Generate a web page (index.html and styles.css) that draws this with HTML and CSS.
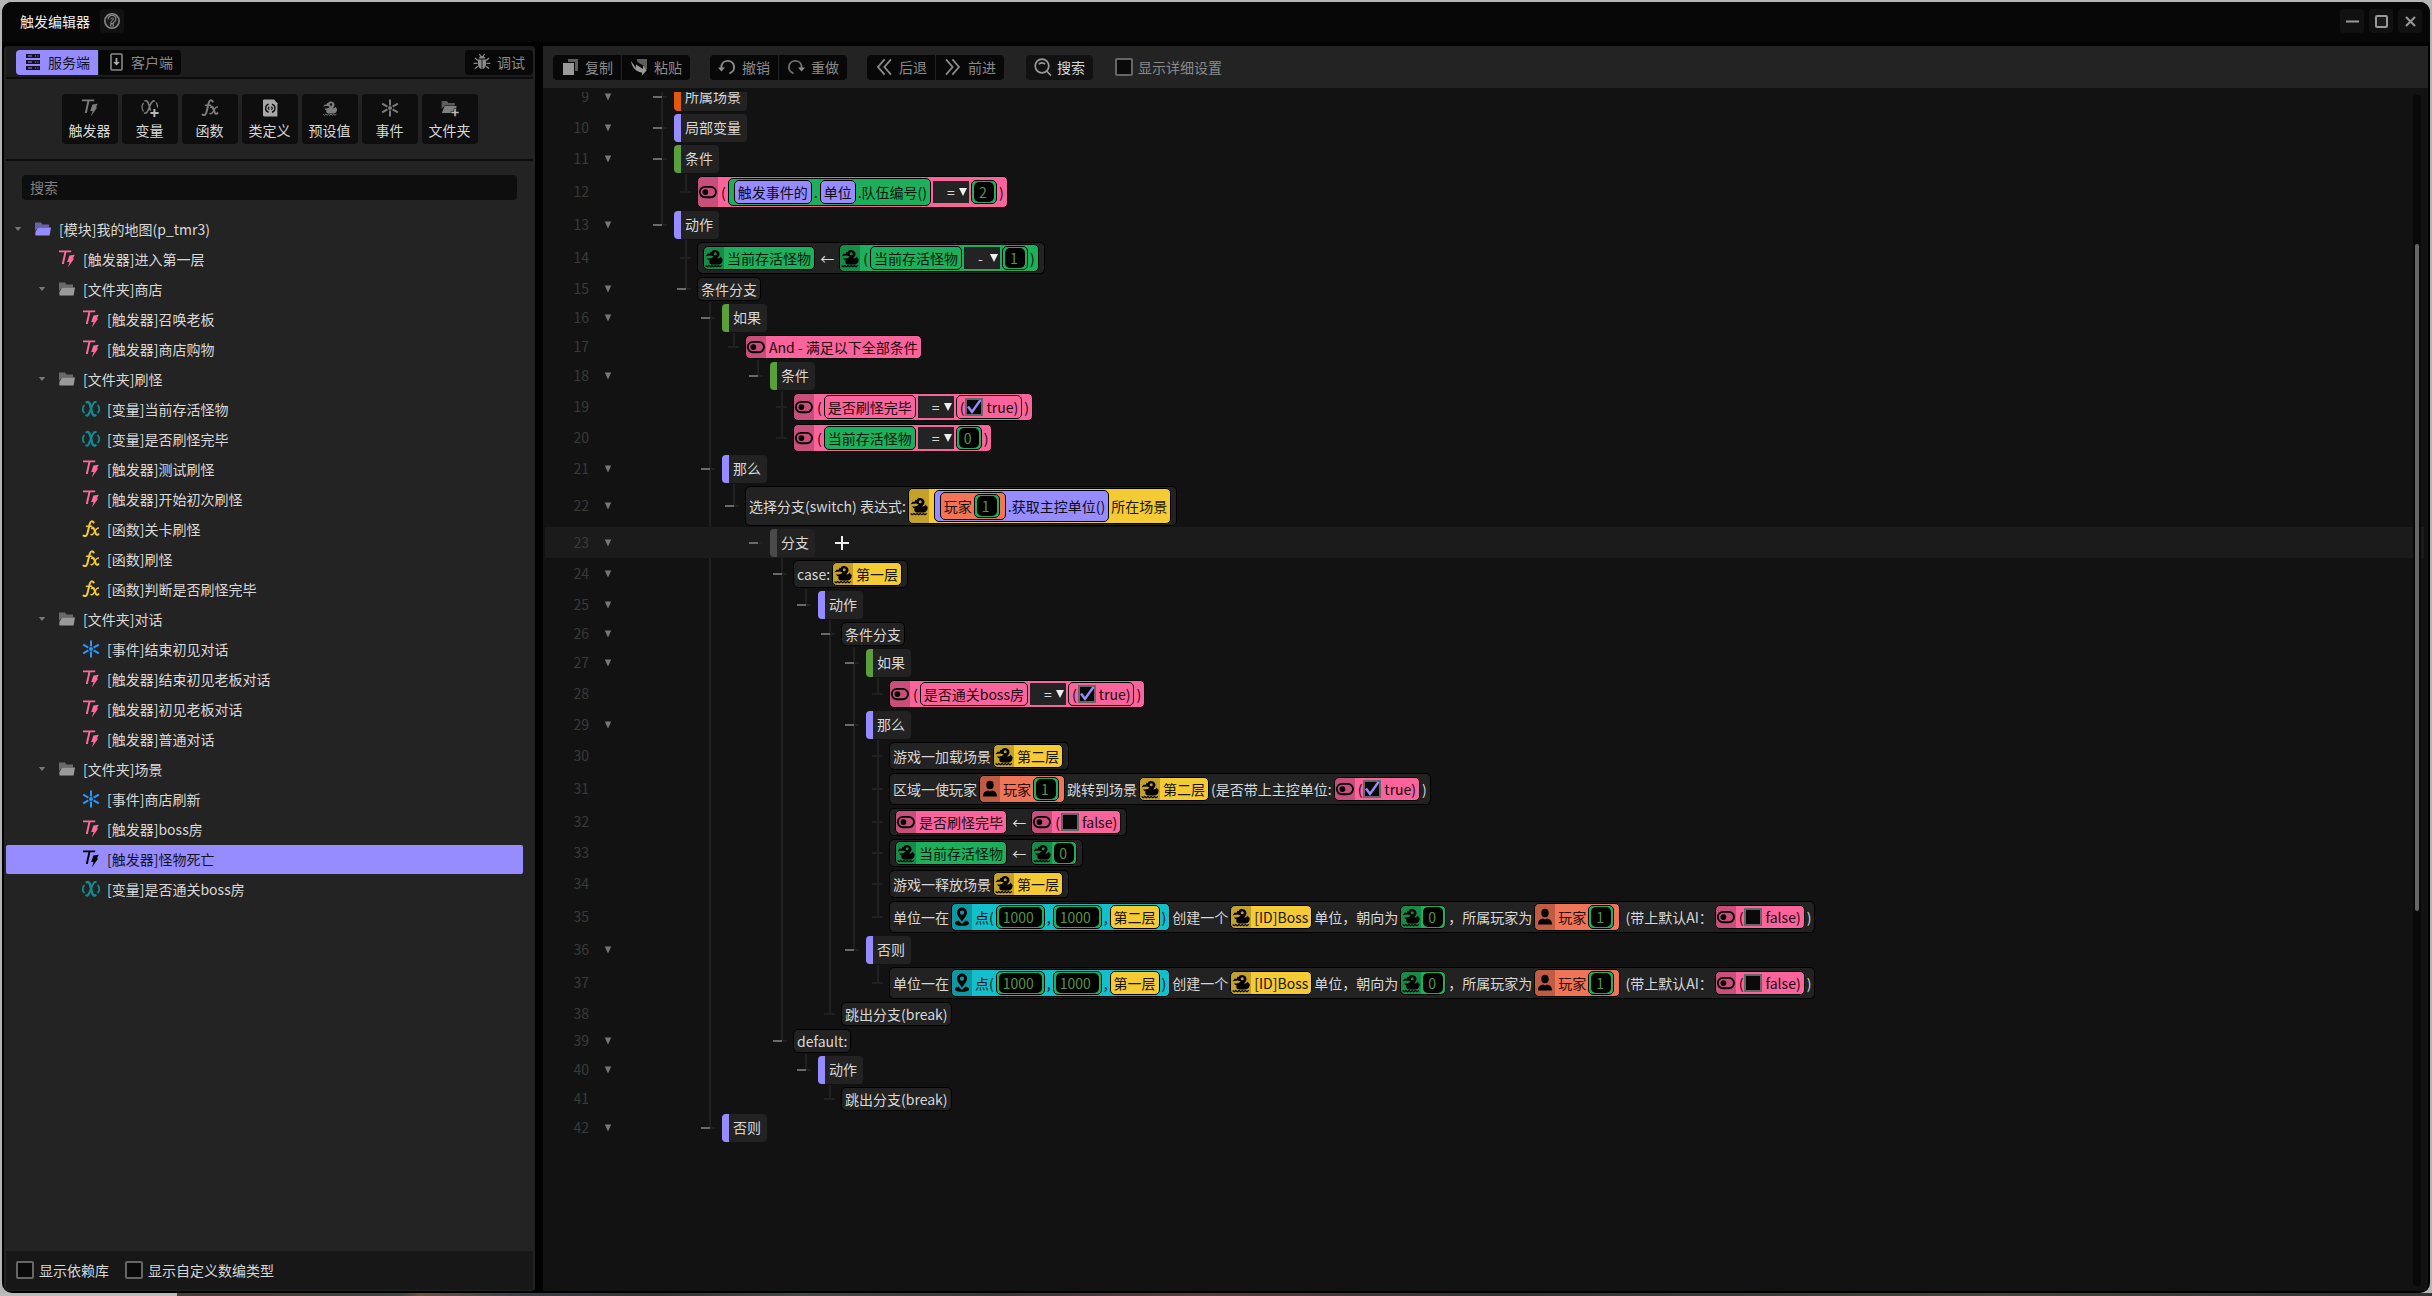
FILE: index.html
```html
<!DOCTYPE html>
<html lang="zh-CN">
<head>
<meta charset="utf-8">
<meta name="viewport" content="width=device-width, initial-scale=1">
<title>触发编辑器</title>
<link rel="stylesheet" href="styles.css">
</head>
<body>
<svg class="sprite" aria-hidden="true">
  <symbol id="trigger" viewBox="0 0 18 18"><path fill="currentColor" d="M1 0.6H13.2V2.2H8.4L5.8 14H3.8L6.4 2.2H1ZM11.4 5.4L16.8 4.8L14.8 8.4H16.2L9.8 17.6L11.6 12H9.2Z"/></symbol>
  <symbol id="variable" viewBox="0 0 18 18"><g fill="none" stroke="currentColor" stroke-linecap="round"><path stroke-width="2.4" d="M4.6 2.2C6.4 1.2 7.3 2.6 8 4.6L10.2 13C10.8 15 11.8 16.4 13.6 15.2"/><path stroke-width="2" d="M13.8 2.2C12 1.4 11.2 3.4 9.8 6.4L8 11C6.8 14 6 16.4 4.2 15.4"/><path stroke-width="1.7" d="M2 5.4C0.4 7.6 0.4 10.2 2 12.4M16 5.4C17.6 7.6 17.6 10.2 16 12.4"/></g></symbol>
  <symbol id="variable-add" viewBox="0 0 18 18"><g fill="none" stroke="currentColor" stroke-linecap="round"><path stroke-width="1.6" d="M4 2C6 1 7 3 7.6 5L9.4 11M13.4 2C11.4 1.2 10.4 3.4 9.2 6L7.2 11C6.2 13.4 5.2 14.8 3.6 14"/><path stroke-width="1.3" d="M2.2 4.4C0.6 6.8 0.6 9.4 2.2 12M15.4 3.8C16.2 5 16.6 6.4 16.4 8"/></g><path fill="#b8b8b8" d="M12.4 10H14.4V13H17.6V15H14.4V18H12.4V15H9.4V13H12.4Z"/></symbol>
  <symbol id="function" viewBox="0 0 18 18"><g fill="none" stroke="currentColor" stroke-linecap="round"><path stroke-width="2" d="M11.6 2.4C10.4 0.6 8.4 1 7.7 4L5.6 12.8C4.9 15.6 3.6 16.8 1.6 15.6"/><path stroke-width="1.4" d="M4.4 6.2H9.8"/><path stroke-width="2.1" d="M10 8.2C11.6 7.2 12 8.6 12.6 10.4L13.6 13.4C14.2 15 15.2 15.2 16.4 14.2"/><path stroke-width="1.4" d="M16.4 8C14.8 7.6 13.8 9.8 12.8 11.4C11.8 13.2 10.8 15.4 9 14.6"/></g></symbol>
  <symbol id="class" viewBox="0 0 18 18"><path fill="#a8a8a8" d="M3.4 0.6H13L16.4 4.2V17.4H3.4C2.4 17.4 2 16.8 2 16V2C2 1.2 2.4 0.6 3.4 0.6Z"/><g fill="none" stroke="#111" stroke-width="1.4"><path d="M7.6 5.2C5.2 6 4.6 7.6 4.6 9.2C4.6 10.8 5.2 12.6 7.6 13.2M11 5.2C13.4 6 14 7.6 14 9.2C14 10.8 13.4 12.6 11 13.2"/><path stroke-width="1.2" d="M8.2 7.6L7.2 9.2L8.2 10.8M10.4 7.6L11.4 9.2L10.4 10.8"/></g></symbol>
  <symbol id="dino" viewBox="0 0 20 22"><path fill="currentColor" fill-rule="evenodd" d="M1.6 9.2L3.8 6.6L5.4 7L6.6 4.8L7.8 5L8.6 3.6C10.4 2.4 14.6 3 15.4 6C16 8.4 14.4 10 13.2 11.2C14.8 11.8 15.8 10.8 17 9.6C17.2 11 17.6 11.4 18.6 11.8C19 14.6 17.4 17.4 14.4 17.6H8C5.4 17.2 4.6 15 5.8 13.6C4.4 13.4 3.4 12.4 3.2 11.2C5.6 12 8.2 11.4 9.6 9.6L7 8.6C5 8.6 3.4 8.8 1.6 9.2ZM11.2 5.2A1.5 1.5 0 1 0 11.2 8.2A1.5 1.5 0 1 0 11.2 5.2Z"/><path fill="none" stroke="currentColor" stroke-width="1.2" d="M1.6 18.6L3.2 19.8L4.8 18.6L6.4 19.8L8 18.6L9.6 19.8L11.2 18.6L12.8 19.8L14.4 18.6L16 19.8L17.8 18.4"/></symbol>
  <symbol id="event" viewBox="0 0 18 18"><g stroke="currentColor" stroke-width="2" fill="currentColor"><path d="M9 0.4V6.4M9 11.6V17.6M1.2 4.6L6.4 7.6M11.6 10.4L16.8 13.4M16.8 4.6L11.6 7.6M6.4 10.4L1.2 13.4"/><circle cx="9" cy="9" r="2" stroke="none"/></g></symbol>
  <symbol id="folder" viewBox="0 0 18 18"><path fill="currentColor" opacity=".6" d="M1 2.6H7L8.4 4.6H15V7.4H4L1 11Z"/><path fill="currentColor" d="M4 7.4H17L15.6 15.4H1.4V12Z"/></symbol>
  <symbol id="folder-add" viewBox="0 0 18 18"><path fill="#5c5c5c" d="M0.6 2H6L7.4 4H13.8V6.6H3.6L0.6 10Z"/><path fill="#7e7e7e" d="M3.6 7H15.6L14.4 14H0.8Z"/><path fill="#b8b8b8" stroke="#111" stroke-width=".6" d="M13 9.6H15.2V12.4H18V14.6H15.2V17.6H13V14.6H10V12.4H13Z"/></symbol>
  <symbol id="toggle" viewBox="0 0 20 22"><rect x="1.8" y="5.9" width="16.2" height="10.4" rx="5.2" fill="none" stroke="currentColor" stroke-width="1.9"/><circle cx="7.4" cy="11.1" r="2.9" fill="currentColor"/></symbol>
  <symbol id="person" viewBox="0 0 20 22"><ellipse cx="10" cy="7" rx="3.7" ry="4.2" fill="currentColor"/><path fill="currentColor" d="M3 18.6C3 14.6 5.2 13.2 8 12.6L10 13.6L12 12.6C14.8 13.2 17 14.6 17 18.6Z"/></symbol>
  <symbol id="pin" viewBox="0 0 20 22"><path fill="currentColor" fill-rule="evenodd" d="M10 1.6A5 5 0 0 1 15 6.6C15 9.8 12 12.4 10 15.8C8 12.4 5 9.8 5 6.6A5 5 0 0 1 10 1.6ZM10 4.4A2.2 2.2 0 1 0 10 8.8A2.2 2.2 0 1 0 10 4.4Z"/><path fill="currentColor" d="M6.4 14.4C4.6 14.8 3 15.8 3 17.2C3 19 6.2 19.8 10 19.8S17 19 17 17.2C17 15.8 15.4 14.8 13.6 14.4L10 18Z"/></symbol>
  <symbol id="server" viewBox="0 0 18 18"><path fill="currentColor" d="M2 1H16V5H2ZM2 7H16V11H2ZM2 13H16V17H2Z"/><path stroke="#968cff" stroke-width="1" d="M4 3H8M4 9H8M4 15H8M11 3H12M13.4 3H14.4M11 9H12M13.4 9H14.4M11 15H12M13.4 15H14.4"/></symbol>
  <symbol id="client" viewBox="0 0 18 18"><rect x="4" y="1" width="11" height="16" rx="1" fill="none" stroke="currentColor" stroke-width="1.6"/><path fill="#aaa" d="M8.6 5H10.4V9H12.8L9.5 12.6L6.2 9H8.6Z"/></symbol>
  <symbol id="bug" viewBox="0 0 18 18"><path fill="currentColor" d="M6 5.6C6 3.6 7.4 2.8 9 2.8S12 3.6 12 5.6ZM5 6.4H8.6V16C6 15.6 5 13.6 5 11ZM9.4 6.4H13V11C13 13.6 12 15.6 9.4 16Z"/><path stroke="currentColor" stroke-width="1.3" fill="none" d="M6.4 1L7.6 3M11.6 1L10.4 3M2 5L4.8 7.4M16 5L13.2 7.4M0.6 10.4H4.6M17.4 10.4H13.4M2 15.8L4.8 13.2M16 15.8L13.2 13.2"/></symbol>
  <symbol id="copy" viewBox="0 0 18 18"><path fill="#5e5e5e" d="M7 1H17V13H14V4H7Z"/><path fill="#9a9a9a" d="M2 5H13V17H2Z"/></symbol>
  <symbol id="paste" viewBox="0 0 18 18"><path fill="#5e5e5e" d="M7 1H17V11L14 14V8L9 5L7 3Z"/><path fill="#9a9a9a" d="M1 3L6 10V6.6L13 11V7.6L16.6 12.6L12 17.4V14.4C7 14.4 2 10 1 3Z"/></symbol>
  <symbol id="undo" viewBox="0 0 18 18"><path fill="none" stroke="#8e8e8e" stroke-width="1.9" d="M3.4 10.4V8A6.4 6.4 0 1 1 11.4 15.4"/><path fill="#8e8e8e" d="M0 9.4H7L3.4 13.6Z"/></symbol>
  <symbol id="redo" viewBox="0 0 18 18"><path fill="none" stroke="#6e6e6e" stroke-width="1.9" d="M14.6 10.4V8A6.4 6.4 0 1 0 6.6 15.4"/><path fill="#8e8e8e" d="M11 9.4H18L14.6 13.6Z"/></symbol>
  <symbol id="back" viewBox="0 0 18 18"><path fill="none" stroke="currentColor" stroke-width="1.8" d="M9.6 1.4L3 9L9.6 16.6M16 1.4L9.4 9L16 16.6"/></symbol>
  <symbol id="forward" viewBox="0 0 18 18"><path fill="none" stroke="currentColor" stroke-width="1.8" d="M2 1.4L8.6 9L2 16.6M8.4 1.4L15 9L8.4 16.6"/></symbol>
  <symbol id="search" viewBox="0 0 18 18"><circle cx="8" cy="8" r="6.8" fill="none" stroke="currentColor" stroke-width="1.7"/><path fill="none" stroke="currentColor" stroke-width="1.7" d="M12.6 13L17 17.6M5 6.4C6 4.6 9.4 4.2 11 6.2"/></symbol>
  <symbol id="help" viewBox="0 0 18 18"><circle cx="9" cy="9" r="7.2" fill="#1c1c1c" stroke="#858585" stroke-width="1.6"/><path fill="none" stroke="#858585" stroke-width="3.6" d="M6.4 7.2C6.4 3.8 11.8 3.8 11.8 7C11.8 9 9 9 9 11.6V14.4"/><path fill="none" stroke="#151515" stroke-width="1.4" d="M6.6 7.4C6.6 4 11.6 4 11.6 7C11.6 9 9 9 9 11M9 12.4V14"/></symbol>
  <symbol id="min" viewBox="0 0 18 18"><path stroke="currentColor" stroke-width="2" d="M3 9.4H16"/></symbol>
  <symbol id="max" viewBox="0 0 18 18"><rect x="4" y="4" width="11" height="11" rx="1" fill="#1a1a1a" stroke="currentColor" stroke-width="2"/></symbol>
  <symbol id="close" viewBox="0 0 18 18"><path stroke="currentColor" stroke-width="2" d="M5 5L14 14M14 5L5 14"/></symbol>
  <symbol id="tri" viewBox="0 0 8 8"><path fill="currentColor" d="M0.8 0.6H7.2L4 7.4Z"/></symbol>
  <symbol id="tri-flat" viewBox="0 0 8 8"><path fill="currentColor" d="M0.8 2H7.2L4 6Z"/></symbol>
</svg>

<div class="window">
  <header class="titlebar">
    <h1>触发编辑器</h1>
    <button class="tool-btn" aria-label="帮助"><svg><use href="#help"/></svg></button>
    <div class="win-btns">
      <button class="tool-btn" aria-label="最小化"><svg><use href="#min"/></svg></button>
      <button class="tool-btn" aria-label="最大化"><svg><use href="#max"/></svg></button>
      <button class="tool-btn" aria-label="关闭"><svg><use href="#close"/></svg></button>
    </div>
  </header>
  <div class="main">
    <aside class="sidebar">
      <div class="tabs">
        <div class="group">
          <button class="btn on"><svg><use href="#server"/></svg>服务端</button>
          <button class="btn"><svg><use href="#client"/></svg>客户端</button>
        </div>
        <div class="group"><button class="btn"><svg><use href="#bug"/></svg>调试</button></div>
      </div>
      <div class="create">
        <button><svg><use href="#trigger"/></svg>触发器</button>
        <button><svg><use href="#variable-add"/></svg>变量</button>
        <button><svg><use href="#function"/></svg>函数</button>
        <button><svg><use href="#class"/></svg>类定义</button>
        <button><svg><use href="#dino"/></svg>预设值</button>
        <button><svg><use href="#event"/></svg>事件</button>
        <button><svg><use href="#folder-add"/></svg>文件夹</button>
      </div>
      <input class="filter" type="text" placeholder="搜索" aria-label="搜索">
      <ul class="tree">
        <li class="root"><i><svg class="tri"><use href="#tri-flat"/></svg></i><svg><use href="#folder"/></svg>[模块]我的地图(p_tmr3)</li>
        <li class="lv1 trg"><i></i><svg><use href="#trigger"/></svg>[触发器]进入第一层</li>
        <li class="lv1"><i><svg class="tri"><use href="#tri-flat"/></svg></i><svg><use href="#folder"/></svg>[文件夹]商店</li>
        <li class="lv2 trg"><i></i><svg><use href="#trigger"/></svg>[触发器]召唤老板</li>
        <li class="lv2 trg"><i></i><svg><use href="#trigger"/></svg>[触发器]商店购物</li>
        <li class="lv1"><i><svg class="tri"><use href="#tri-flat"/></svg></i><svg><use href="#folder"/></svg>[文件夹]刷怪</li>
        <li class="lv2 var"><i></i><svg><use href="#variable"/></svg>[变量]当前存活怪物</li>
        <li class="lv2 var"><i></i><svg><use href="#variable"/></svg>[变量]是否刷怪完毕</li>
        <li class="lv2 trg"><i></i><svg><use href="#trigger"/></svg>[触发器]测试刷怪</li>
        <li class="lv2 trg"><i></i><svg><use href="#trigger"/></svg>[触发器]开始初次刷怪</li>
        <li class="lv2 fun"><i></i><svg><use href="#function"/></svg>[函数]关卡刷怪</li>
        <li class="lv2 fun"><i></i><svg><use href="#function"/></svg>[函数]刷怪</li>
        <li class="lv2 fun"><i></i><svg><use href="#function"/></svg>[函数]判断是否刷怪完毕</li>
        <li class="lv1"><i><svg class="tri"><use href="#tri-flat"/></svg></i><svg><use href="#folder"/></svg>[文件夹]对话</li>
        <li class="lv2 evt"><i></i><svg><use href="#event"/></svg>[事件]结束初见对话</li>
        <li class="lv2 trg"><i></i><svg><use href="#trigger"/></svg>[触发器]结束初见老板对话</li>
        <li class="lv2 trg"><i></i><svg><use href="#trigger"/></svg>[触发器]初见老板对话</li>
        <li class="lv2 trg"><i></i><svg><use href="#trigger"/></svg>[触发器]普通对话</li>
        <li class="lv1"><i><svg class="tri"><use href="#tri-flat"/></svg></i><svg><use href="#folder"/></svg>[文件夹]场景</li>
        <li class="lv2 evt"><i></i><svg><use href="#event"/></svg>[事件]商店刷新</li>
        <li class="lv2 trg"><i></i><svg><use href="#trigger"/></svg>[触发器]boss房</li>
        <li class="lv2 selected"><i></i><svg><use href="#trigger"/></svg>[触发器]怪物死亡</li>
        <li class="lv2 var"><i></i><svg><use href="#variable"/></svg>[变量]是否通关boss房</li>
      </ul>
      <footer class="options">
        <label class="check"><input type="checkbox">显示依赖库</label>
        <label class="check"><input type="checkbox">显示自定义数编类型</label>
      </footer>
    </aside>

    <section class="editor">
      <div class="toolbar">
        <div class="group"><button class="btn"><svg><use href="#copy"/></svg>复制</button><button class="btn"><svg><use href="#paste"/></svg>粘贴</button></div>
        <div class="group"><button class="btn"><svg><use href="#undo"/></svg>撤销</button><button class="btn"><svg><use href="#redo"/></svg>重做</button></div>
        <div class="group"><button class="btn"><svg><use href="#back"/></svg>后退</button><button class="btn"><svg><use href="#forward"/></svg>前进</button></div>
        <button class="btn find"><svg><use href="#search"/></svg>搜索</button>
        <label class="check"><input type="checkbox">显示详细设置</label>
      </div>
      <div class="view">
        <div class="rows">
          <div class="row"><b>9</b><button class="fold" aria-label="折叠"><svg><use href="#tri"/></svg></button><i class="n v"></i><div class="sec orange">所属场景</div></div>
          <div class="row"><b>10</b><button class="fold" aria-label="折叠"><svg><use href="#tri"/></svg></button><i class="n v"></i><div class="sec purple">局部变量</div></div>
          <div class="row"><b>11</b><button class="fold" aria-label="折叠"><svg><use href="#tri"/></svg></button><i class="n v"></i><div class="sec green">条件</div></div>
          <div class="row"><b>12</b><span class="fold"></span><i class="v"></i><i class="l h"></i><div class="p pink"><span class="ic"><svg><use href="#toggle"/></svg></span>(<div class="p green"><div class="p purple">触发事件的</div>.<div class="p purple">单位</div>.队伍编号()</div><select aria-label="运算符"><option>=</option></select><div class="p num"><input value="2" aria-label="数值"></div>)</div></div>
          <div class="row"><b>13</b><button class="fold" aria-label="折叠"><svg><use href="#tri"/></svg></button><i class="n h"></i><div class="sec purple">动作</div></div>
          <div class="row"><b>14</b><span class="fold"></span><i></i><i class="l v"></i><div class="p"><div class="p green"><span class="ic"><svg><use href="#dino"/></svg></span>当前存活怪物</div> ← <div class="p green"><span class="ic"><svg><use href="#dino"/></svg></span>(<div class="p green">当前存活怪物</div><select aria-label="运算符"><option>-</option></select><div class="p num"><input value="1" aria-label="数值"></div>)</div></div></div>
          <div class="row"><b>15</b><button class="fold" aria-label="折叠"><svg><use href="#tri"/></svg></button><i></i><i class="n h"></i><div class="p">条件分支</div></div>
          <div class="row"><b>16</b><button class="fold" aria-label="折叠"><svg><use href="#tri"/></svg></button><i></i><i></i><i class="n v"></i><div class="sec green">如果</div></div>
          <div class="row"><b>17</b><span class="fold"></span><i></i><i></i><i class="v"></i><i class="l h"></i><div class="p pink"><span class="ic"><svg><use href="#toggle"/></svg></span>And - 满足以下全部条件</div></div>
          <div class="row"><b>18</b><button class="fold" aria-label="折叠"><svg><use href="#tri"/></svg></button><i></i><i></i><i class="v"></i><i></i><i class="n h"></i><div class="sec green">条件</div></div>
          <div class="row"><b>19</b><span class="fold"></span><i></i><i></i><i class="v"></i><i></i><i></i><i class="l v"></i><div class="p pink"><span class="ic"><svg><use href="#toggle"/></svg></span>(<div class="p pink">是否刷怪完毕</div><select aria-label="运算符"><option>=</option></select><div class="p pink">(<input type="checkbox" checked aria-label="true">true)</div>)</div></div>
          <div class="row"><b>20</b><span class="fold"></span><i></i><i></i><i class="v"></i><i></i><i></i><i class="l h"></i><div class="p pink"><span class="ic"><svg><use href="#toggle"/></svg></span>(<div class="p green">当前存活怪物</div><select aria-label="运算符"><option>=</option></select><div class="p num"><input value="0" aria-label="数值"></div>)</div></div>
          <div class="row"><b>21</b><button class="fold" aria-label="折叠"><svg><use href="#tri"/></svg></button><i></i><i></i><i class="n v"></i><div class="sec purple">那么</div></div>
          <div class="row"><b>22</b><button class="fold" aria-label="折叠"><svg><use href="#tri"/></svg></button><i></i><i></i><i class="v"></i><i class="n h"></i><div class="p">选择分支(switch) 表达式:<div class="p yellow"><span class="ic"><svg><use href="#dino"/></svg></span><div class="p purple"><div class="p orange">玩家<div class="p num"><input value="1" aria-label="数值"></div></div>.获取主控单位()</div>所在场景</div></div></div>
          <div class="row current"><b>23</b><button class="fold" aria-label="折叠"><svg><use href="#tri"/></svg></button><i></i><i></i><i></i><i></i><i class="n"></i><div class="sec gray">分支</div><button class="add" aria-label="添加"></button></div>
          <div class="row"><b>24</b><button class="fold" aria-label="折叠"><svg><use href="#tri"/></svg></button><i></i><i></i><i class="v"></i><i></i><i></i><i class="n v"></i><div class="p">case:<div class="p yellow"><span class="ic"><svg><use href="#dino"/></svg></span>第一层</div></div></div>
          <div class="row"><b>25</b><button class="fold" aria-label="折叠"><svg><use href="#tri"/></svg></button><i></i><i></i><i class="v"></i><i></i><i></i><i class="v"></i><i class="n h"></i><div class="sec purple">动作</div></div>
          <div class="row"><b>26</b><button class="fold" aria-label="折叠"><svg><use href="#tri"/></svg></button><i></i><i></i><i class="v"></i><i></i><i></i><i class="v"></i><i></i><i class="n v"></i><div class="p">条件分支</div></div>
          <div class="row"><b>27</b><button class="fold" aria-label="折叠"><svg><use href="#tri"/></svg></button><i></i><i></i><i class="v"></i><i></i><i></i><i class="v"></i><i></i><i class="v"></i><i class="n v"></i><div class="sec green">如果</div></div>
          <div class="row"><b>28</b><span class="fold"></span><i></i><i></i><i class="v"></i><i></i><i></i><i class="v"></i><i></i><i class="v"></i><i class="v"></i><i class="l h"></i><div class="p pink"><span class="ic"><svg><use href="#toggle"/></svg></span>(<div class="p pink">是否通关boss房</div><select aria-label="运算符"><option>=</option></select><div class="p pink">(<input type="checkbox" checked aria-label="true">true)</div>)</div></div>
          <div class="row"><b>29</b><button class="fold" aria-label="折叠"><svg><use href="#tri"/></svg></button><i></i><i></i><i class="v"></i><i></i><i></i><i class="v"></i><i></i><i class="v"></i><i class="n v"></i><div class="sec purple">那么</div></div>
          <div class="row"><b>30</b><span class="fold"></span><i></i><i></i><i class="v"></i><i></i><i></i><i class="v"></i><i></i><i class="v"></i><i class="v"></i><i class="l v"></i><div class="p">游戏一加载场景<div class="p yellow"><span class="ic"><svg><use href="#dino"/></svg></span>第二层</div></div></div>
          <div class="row"><b>31</b><span class="fold"></span><i></i><i></i><i class="v"></i><i></i><i></i><i class="v"></i><i></i><i class="v"></i><i class="v"></i><i class="l v"></i><div class="p">区域一使玩家<div class="p orange"><span class="ic"><svg><use href="#person"/></svg></span>玩家<div class="p num"><input value="1" aria-label="数值"></div></div>跳转到场景<div class="p yellow"><span class="ic"><svg><use href="#dino"/></svg></span>第二层</div>(是否带上主控单位:<div class="p pink"><span class="ic"><svg><use href="#toggle"/></svg></span>(<input type="checkbox" checked aria-label="true">true)</div>)</div></div>
          <div class="row"><b>32</b><span class="fold"></span><i></i><i></i><i class="v"></i><i></i><i></i><i class="v"></i><i></i><i class="v"></i><i class="v"></i><i class="l v"></i><div class="p"><div class="p pink"><span class="ic"><svg><use href="#toggle"/></svg></span>是否刷怪完毕</div> ← <div class="p pink"><span class="ic"><svg><use href="#toggle"/></svg></span>(<input type="checkbox" aria-label="false">false)</div></div></div>
          <div class="row"><b>33</b><span class="fold"></span><i></i><i></i><i class="v"></i><i></i><i></i><i class="v"></i><i></i><i class="v"></i><i class="v"></i><i class="l v"></i><div class="p"><div class="p green"><span class="ic"><svg><use href="#dino"/></svg></span>当前存活怪物</div> ← <div class="p num"><span class="ic"><svg><use href="#dino"/></svg></span><input value="0" aria-label="数值"></div></div></div>
          <div class="row"><b>34</b><span class="fold"></span><i></i><i></i><i class="v"></i><i></i><i></i><i class="v"></i><i></i><i class="v"></i><i class="v"></i><i class="l v"></i><div class="p">游戏一释放场景<div class="p yellow"><span class="ic"><svg><use href="#dino"/></svg></span>第一层</div></div></div>
          <div class="row"><b>35</b><span class="fold"></span><i></i><i></i><i class="v"></i><i></i><i></i><i class="v"></i><i></i><i class="v"></i><i class="v"></i><i class="l h"></i><div class="p">单位一在<div class="p cyan"><span class="ic"><svg><use href="#pin"/></svg></span>点(<div class="p num"><input class="wide" value="1000" aria-label="X"></div>,<div class="p num"><input class="wide" value="1000" aria-label="Y"></div>,<div class="p yellow">第二层</div>)</div>创建一个<div class="p yellow"><span class="ic"><svg><use href="#dino"/></svg></span>[ID]Boss</div>单位，朝向为<div class="p num"><span class="ic"><svg><use href="#dino"/></svg></span><input value="0" aria-label="数值"></div>，所属玩家为<div class="p orange"><span class="ic"><svg><use href="#person"/></svg></span>玩家<div class="p num"><input value="1" aria-label="数值"></div></div> (带上默认AI：<div class="p pink"><span class="ic"><svg><use href="#toggle"/></svg></span>(<input type="checkbox" aria-label="false">false)</div>)</div></div>
          <div class="row"><b>36</b><button class="fold" aria-label="折叠"><svg><use href="#tri"/></svg></button><i></i><i></i><i class="v"></i><i></i><i></i><i class="v"></i><i></i><i class="v"></i><i class="n h"></i><div class="sec purple">否则</div></div>
          <div class="row"><b>37</b><span class="fold"></span><i></i><i></i><i class="v"></i><i></i><i></i><i class="v"></i><i></i><i class="v"></i><i></i><i class="l h"></i><div class="p">单位一在<div class="p cyan"><span class="ic"><svg><use href="#pin"/></svg></span>点(<div class="p num"><input class="wide" value="1000" aria-label="X"></div>,<div class="p num"><input class="wide" value="1000" aria-label="Y"></div>,<div class="p yellow">第一层</div>)</div>创建一个<div class="p yellow"><span class="ic"><svg><use href="#dino"/></svg></span>[ID]Boss</div>单位，朝向为<div class="p num"><span class="ic"><svg><use href="#dino"/></svg></span><input value="0" aria-label="数值"></div>，所属玩家为<div class="p orange"><span class="ic"><svg><use href="#person"/></svg></span>玩家<div class="p num"><input value="1" aria-label="数值"></div></div> (带上默认AI：<div class="p pink"><span class="ic"><svg><use href="#toggle"/></svg></span>(<input type="checkbox" aria-label="false">false)</div>)</div></div>
          <div class="row"><b>38</b><span class="fold"></span><i></i><i></i><i class="v"></i><i></i><i></i><i class="v"></i><i></i><i class="l h"></i><div class="p">跳出分支(break)</div></div>
          <div class="row"><b>39</b><button class="fold" aria-label="折叠"><svg><use href="#tri"/></svg></button><i></i><i></i><i class="v"></i><i></i><i></i><i class="n h"></i><div class="p">default:</div></div>
          <div class="row"><b>40</b><button class="fold" aria-label="折叠"><svg><use href="#tri"/></svg></button><i></i><i></i><i class="v"></i><i></i><i></i><i></i><i class="n h"></i><div class="sec purple">动作</div></div>
          <div class="row"><b>41</b><span class="fold"></span><i></i><i></i><i class="v"></i><i></i><i></i><i></i><i></i><i class="l h"></i><div class="p">跳出分支(break)</div></div>
          <div class="row"><b>42</b><button class="fold" aria-label="折叠"><svg><use href="#tri"/></svg></button><i></i><i></i><i class="n h"></i><div class="sec purple">否则</div></div>
        </div>
        <div class="scrollbar"><div class="thumb"></div></div>
      </div>
    </section>
  </div>
</div>
</body>
</html>
```
FILE: styles.css
```css
* { box-sizing: border-box; }

body {
  margin: 0;
  min-height: 100vh;
  display: flex;
  padding: 2px 2px 3px;
  background:
    linear-gradient(90deg, #bbb 0 177px, #4a3d38 177px 260px, #3d4440 400px, #6b5140 420px, #3a3f4a 520px, #333 660px, #444a48 800px, #3b3538 1000px, #5a3c3c 1200px, #333 1500px, #48443c 2000px, #333 2400px) left bottom / 100% 3px no-repeat,
    #b5b5b5;
  color: #d8d8d8;
  font: 14px/20px "Noto Sans CJK SC", sans-serif;
}

button, input, select { font: inherit; color: inherit; border: 0; margin: 0; padding: 0; outline: 0; }
button { background: none; cursor: pointer; }
svg { display: block; flex: none; width: 18px; height: 18px; }
.sprite { display: none; }

.window {
  flex: 1;
  min-width: 0;
  display: flex;
  flex-direction: column;
  background: #000;
  border-radius: 10px;
  overflow: hidden;
}

/* title bar */
.titlebar { display: flex; align-items: center; gap: 10px; height: 40px; padding: 0 8px 2px 18px; background: #070707; }
.titlebar h1 { margin: 0; font-size: 14px; font-weight: 400; color: #eee; }
.tool-btn { display: grid; place-items: center; width: 24px; height: 24px; border-radius: 4px; background: #111; color: #999; }
.win-btns { display: flex; gap: 5px; margin-left: auto; }

.main { flex: 1; display: flex; gap: 8px; padding: 4px 2px 2px; }

/* shared controls */
.group { display: flex; gap: 1px; border-radius: 4px; overflow: hidden; }
.btn { display: flex; align-items: center; gap: 6px; height: 25px; padding: 0 8px; background: #080808; color: #8a8a8a; white-space: nowrap; }
.btn.on { background: #968cff; color: #15131f; }
.check { display: flex; align-items: center; gap: 5px; }
input[type="checkbox"] {
  appearance: none;
  flex: none;
  width: 18px;
  height: 18px;
  border: 2px solid #666;
  background: #0a0a0a;
}
.check input { border-radius: 2px; }
input[type="checkbox"]:checked {
  background: url("data:image/svg+xml,%3Csvg xmlns='http://www.w3.org/2000/svg' viewBox='0 0 18 18'%3E%3Cpath d='M3 8.5L7 14L16.5 0.5' fill='none' stroke='%23968cff' stroke-width='2.4'/%3E%3C/svg%3E") 0 0 / 18px 18px no-repeat border-box, #0a0a0a;
}

/* sidebar */
.sidebar { width: 531px; flex: none; display: flex; flex-direction: column; padding: 0 2px 1px; background: #232323; border-radius: 4px; }
.tabs { display: flex; justify-content: space-between; padding: 4px 0 2px 10px; background: #1c1c1c; border-bottom: 2px solid #0c0c0c; }
.tabs .btn { padding-bottom: 1px; }
.create { display: flex; justify-content: center; gap: 4px; padding: 15px 0; border-bottom: 2px solid #0c0c0c; }
.create button { display: flex; flex-direction: column; align-items: center; gap: 3px; width: 56px; height: 50px; padding-top: 5px; border-radius: 4px; background: #0e0e0e; color: #d8d8d8; }
.create svg { color: #7c7c7c; }
.filter { height: 25px; margin: 14px 16px 15px; padding: 0 8px 1px; border-radius: 4px; background: #0e0e0e; }
.filter::placeholder { color: #808080; opacity: 1; }

.tree { list-style: none; margin: 0; padding: 0 10px 0 0; display: grid; gap: 1px; }
.tree li { display: flex; align-items: center; height: 29px; padding-bottom: 1px; border-radius: 2px; white-space: nowrap; }
.tree i { display: grid; place-items: center; width: 24px; color: #777; }
.tree li > svg { margin: 0 7px 0 4px; color: #999; }
.tree .tri { width: 8px; height: 8px; }
.tree .lv1 { padding-left: 24px; }
.tree .lv2 { padding-left: 48px; }
.tree .root > svg { color: #968cff; }
.tree .trg > svg { color: #ff6a9e; }
.tree .var > svg { color: #0d8f92; }
.tree .fun > svg { color: #f4ca35; }
.tree .evt > svg { color: #2f97f5; }
.tree .selected { background: #968cff; color: #15131f; }
.tree .selected > svg { color: #000; }

.options { display: flex; gap: 16px; height: 39px; margin-top: auto; padding: 0 10px 1px; background: #171717; }

/* editor */
.editor { flex: 1; min-width: 0; display: flex; flex-direction: column; background: #121212; }
.toolbar { display: flex; align-items: center; gap: 20px; height: 42px; padding: 0 10px; background: #232323; }
.find { gap: 5px; margin: 0 2px; border-radius: 4px; background: #111; color: #d8d8d8; }
.find svg { color: #999; }
.toolbar .check { color: #8a8a8a; }

.view { flex: 1; position: relative; margin-top: 4px; padding: 0 4px 0 2px; overflow: hidden; }
.rows { margin-top: -11px; }
.row { display: flex; align-items: center; padding: 2px 0 1px; white-space: nowrap; }
.row.current { background: #1b1b1b; }
.row > b { width: 44px; padding-bottom: 2px; text-align: right; font-weight: 400; color: #3a3a3a; }
.row > .fold { display: grid; place-items: center; width: 37px; margin-right: 23px; color: #777; }
.fold svg { width: 8px; height: 8px; }

/* indent guides: v = full line, h = upper half, n = node dash, l = leaf dash */
.row > i { --line: none; --dash: none; flex: none; align-self: stretch; width: 24px; margin: -2px 0 -1px; background: var(--dash), var(--line); }
.row > .v { --line: linear-gradient(#202020, #202020) 12px 0 / 2px 100% no-repeat; }
.row > .h { --line: linear-gradient(#202020, #202020) 12px 0 / 2px 50% no-repeat; }
.row > .n { --dash: linear-gradient(90deg, #6a6a6a 9px, #202020 9px) 4px 50% / 14px 2px no-repeat; }
.row > .l { --dash: linear-gradient(#202020, #202020) 7px 50% / 11px 2px no-repeat; }

.sec { margin-left: 1px; padding: 3px 6px 5px 4px; border-left: 7px solid; border-radius: 4px; background: #222; }
.sec.orange { border-left-color: #e0590f; }
.sec.purple { border-left-color: #968cff; }
.sec.green { border-left-color: #5b9f3c; }
.sec.gray { border-left-color: #4a4a4a; }
.sec.orange, .sec.purple, .sec.green, .sec.gray { color: #d8d8d8; }

/* expression pills, nested to any depth */
.p { display: flex; align-items: center; padding: 1px 3px; border: 1px solid #000; border-radius: 5px; background: #222; white-space: pre; }
.p .p { margin: 0 2px; }
.p.pink { background: #fa639c; color: #1a0a10; }
.p.green, .p.num { background: #1daf5c; color: #04180c; }
.p.purple { background: #968cff; color: #0c0a1a; }
.p.yellow { background: #f4ca35; color: #1a1504; }
.p.orange { background: #f07455; color: #1f0c07; }
.p.cyan { background: #12bfca; color: #04181a; }
.ic { display: grid; place-items: center; align-self: stretch; width: 20px; margin: -1px 3px -1px -3px; border-radius: 4px 0 0 4px; background: rgba(0, 0, 0, .2); color: #000; }
.ic svg { width: 20px; height: 22px; }

.p.num { padding: 1px 2px; }
.num .ic { margin: -1px 2px -1px -2px; }
.num input { width: 20px; height: 20px; padding: 0 0 1px 5px; border-radius: 5px; background: #000; color: #5a9440; }
.num .wide { width: 43px; padding-left: 4px; }
.p input[type="checkbox"] { margin: 0 3px 0 1px; }

select {
  appearance: none;
  width: 36px;
  height: 22px;
  padding-left: 14px;
  color: #d8d8d8;
  background: url("data:image/svg+xml,%3Csvg xmlns='http://www.w3.org/2000/svg' viewBox='0 0 8 8'%3E%3Cpath d='M0 0H8L4 8Z' fill='%23eee'/%3E%3C/svg%3E") 26px 7px / 8px 8px no-repeat #232323;
}

.add {
  width: 14px;
  height: 14px;
  margin-left: 20px;
  background:
    linear-gradient(#eee, #eee) 50% 50% / 2px 14px no-repeat,
    linear-gradient(#eee, #eee) 50% 50% / 14px 2px no-repeat;
}

/* scroll track over the right edge of the rows */
.scrollbar { position: absolute; top: 3px; right: 7px; bottom: 5px; width: 8px; padding: 0 2px; border-radius: 4px; background: #080808; }
.thumb { height: 56%; margin-top: 149px; border-radius: 2px; background: #666; }
```
